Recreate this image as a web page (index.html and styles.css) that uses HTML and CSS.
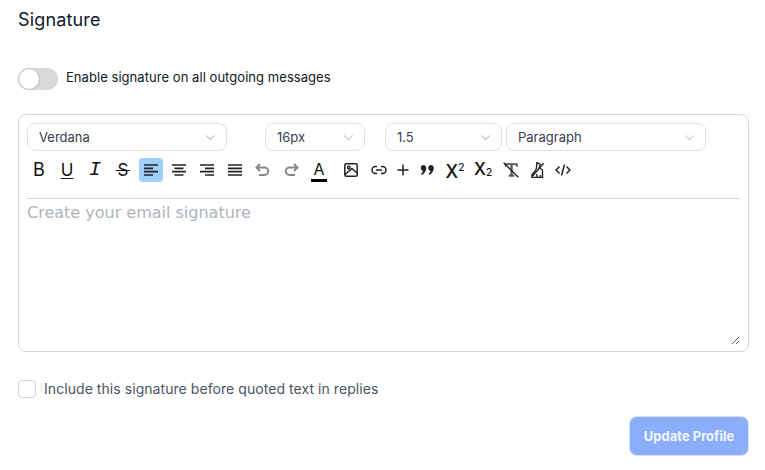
FILE: index.html
```html
<!DOCTYPE html>
<html lang="en">

<head>
  <meta charset="UTF-8" />
  <title>Signature</title>
  <link rel="stylesheet" href="styles.css">
</head>

<body>
  <h1 class="title">Signature</h1>

  <label class="toggle-row">
    <span class="toggle"><span class="knob"></span></span>
    <span>Enable signature on all outgoing messages</span>
  </label>

  <div class="editor">
    <div class="select-row">
      <div class="select font-select">Verdana<svg viewBox="0 0 12 8"><path d="M1 1.500l5 5 5-5" /></svg></div>
      <div class="select size-select">16px<svg viewBox="0 0 12 8"><path d="M1 1.500l5 5 5-5" /></svg></div>
      <div class="select height-select">1.5<svg viewBox="0 0 12 8"><path d="M1 1.500l5 5 5-5" /></svg></div>
      <div class="select font-select">Paragraph<svg viewBox="0 0 12 8"><path d="M1 1.500l5 5 5-5" /></svg></div>
    </div>

    <div class="toolbar">
      <button class="tool letter bold">B</button>
      <button class="tool letter underline">U</button>
      <button class="tool letter italic">I</button>
      <button class="tool letter strike">S</button>
      <button class="tool active">
        <svg viewBox="0 0 14 12"><path d="M0 1h14M0 4.300h9M0 7.700h14M0 11h9" /></svg>
      </button>
      <button class="tool">
        <svg viewBox="0 0 14 12"><path d="M0 1h14M2.500 4.300h9M0 7.700h14M2.500 11h9" /></svg>
      </button>
      <button class="tool">
        <svg viewBox="0 0 14 12"><path d="M0 1h14M5 4.300h9M0 7.700h14M5 11h9" /></svg>
      </button>
      <button class="tool">
        <svg viewBox="0 0 14 12"><path d="M0 1h14M0 4.300h14M0 7.700h14M0 11h14" /></svg>
      </button>
      <button class="tool muted">
        <svg class="icon16" viewBox="0 0 16 16"><path d="M5 2L1.500 5.500 5 9M1.500 5.500h8a3.750 3.750 0 0 1 0 7.500H4" /></svg>
      </button>
      <button class="tool muted">
        <svg class="icon16" viewBox="0 0 16 16"><path d="M11 2l3.500 3.500L11 9M14.500 5.500h-8a3.750 3.750 0 0 0 0 7.500H12" /></svg>
      </button>
      <button class="tool letter color">A</button>
      <button class="tool image-tool">
        <svg class="icon16" viewBox="0 0 16 16">
          <rect x="1.800" y="1.800" width="12.400" height="12.400" rx="1.500" />
          <circle cx="5.800" cy="5.600" r="1.300" />
          <path d="M2 12.500l7-6 5 4.500" />
        </svg>
      </button>
      <button class="tool">
        <svg class="icon16" viewBox="0 0 16 16"><path d="M6 4.500H4.500a3.500 3.500 0 0 0 0 7H6M10 4.500h1.500a3.500 3.500 0 0 1 0 7H10M5 8h6" /></svg>
      </button>
      <button class="tool plus">
        <svg class="icon16" viewBox="0 0 16 16"><path d="M8 2.500v11M2.500 8h11" /></svg>
      </button>
      <button class="tool">
        <svg class="icon16 solid" viewBox="0 0 16 16">
          <path d="M4 3a3.200 3.200 0 0 1 3.200 3.200c0 3.200-2 5.500-4.500 6.800l-.7-1c1.200-.9 1.800-1.800 2-2.900A3.200 3.200 0 0 1 4 3z" />
          <path d="M11.500 3a3.200 3.200 0 0 1 3.200 3.200c0 3.200-2 5.500-4.500 6.800l-.7-1c1.200-.9 1.800-1.800 2-2.900a3.200 3.200 0 0 1 0-6.100z" />
        </svg>
      </button>
      <button class="tool letter script sup-tool"><span>X<sup>2</sup></span></button>
      <button class="tool letter script sub-tool"><span>X<sub>2</sub></span></button>
      <button class="tool">
        <svg class="icon18" viewBox="0 0 16 16">
          <path class="grey-fill" d="M2.500 2h11.500v3h-1.500l-.5-1.500H9.500v8.500l1.500.3V14H6v-1.700l1.500-.3V3.500H4.500L4 5H2.500z" />
          <path d="M1.500 1.500l13 13" />
        </svg>
      </button>
      <button class="tool brush-tool">
        <svg class="icon18" viewBox="0 0 16 16">
          <path d="M7 1.500l3 1.500-1 3 3 2v6.500H2.500v-2l3-4 1-1.500zM7 14.500v-3M10 14.500v-2" />
          <path d="M3 13.500L13 2" />
        </svg>
      </button>
      <button class="tool code-tool">
        <svg class="icon16" viewBox="0 0 16 16"><path d="M4.500 4.500L1 8l3.500 3.500M11.500 4.500L15 8l-3.500 3.500M9.500 2.500l-3 11" /></svg>
      </button>
    </div>

    <div class="divider"></div>
    <textarea class="body-input" placeholder="Create your email signature"></textarea>
  </div>

  <label class="check-row">
    <span class="checkbox"></span>
    <span>Include this signature before quoted text in replies</span>
  </label>

  <div class="actions">
    <button class="save" disabled>Update Profile</button>
  </div>
</body>

</html>
```

FILE: styles.css
```css
body {
  font-family: Inter, Arial, sans-serif;
  margin: 0;
  padding: 9px 16px 0 18px;
  color: #111827;
  background-color: #fff;
}

.title {
  font-size: 18px;
  line-height: 22px;
  font-weight: 400;
  letter-spacing: 0.15px;
  margin: 0;
}

.toggle-row {
  display: flex;
  align-items: flex-start;
  gap: 8px;
  margin-top: 37px;
  font-size: 13px;
  line-height: 18px;
  letter-spacing: 0.05px;
}

.toggle {
  width: 40px;
  height: 22px;
  border-radius: 11px;
  background-color: #d9d9d9;
  display: flex;
  align-items: center;
}

.knob {
  width: 20px;
  height: 20px;
  margin-left: 1px;
  border-radius: 50%;
  background-color: #fff;
  box-shadow: 0 0 2px rgba(0, 0, 0, 0.35);
}

.editor {
  box-sizing: border-box;
  margin-top: 24px;
  height: 238px;
  border: 1px solid #d2d6e0;
  border-radius: 8px;
  padding: 8px 8px 6px 8px;
  display: flex;
  flex-direction: column;
}

.select-row {
  display: flex;
  gap: 4px;
}

.select {
  box-sizing: border-box;
  height: 28px;
  border: 1px solid #e0e2e7;
  border-radius: 8px;
  padding: 0 10px 0 11px;
  display: flex;
  align-items: center;
  justify-content: space-between;
  font-size: 13px;
  color: #374151;
}

.select svg {
  width: 11px;
  height: 7px;
  fill: none;
  stroke: #c4c7cd;
  stroke-width: 1.200;
}

.font-select {
  width: 200px;
}

.size-select {
  width: 100px;
  margin-left: 34px;
}

.height-select {
  width: 117px;
  margin-left: 16px;
}

.toolbar {
  display: flex;
  gap: 4px;
  margin-top: 7px;
}

.tool {
  width: 24px;
  height: 24px;
  padding: 0;
  border: 0;
  border-radius: 4px;
  background: none;
  color: #111;
  display: flex;
  align-items: center;
  justify-content: center;
  position: relative;
  font-family: Inter, Arial, sans-serif;
}

.tool svg {
  width: 14px;
  height: 12px;
  fill: none;
  stroke: #1f2328;
  stroke-width: 1.700;
}

.tool .icon16 {
  width: 16px;
  height: 16px;
  stroke-width: 1.500;
}

.tool .icon18 {
  width: 18px;
  height: 18px;
  stroke-width: 1.200;
}

.tool .solid {
  fill: #1f2328;
  stroke: none;
}

.tool .grey-fill {
  fill: #55585d;
  stroke: none;
}

.active {
  background-color: #a0cffb;
}

.tool.muted svg {
  stroke: #85888d;
  stroke-width: 2;
}

.letter {
  font-size: 17px;
  line-height: 24px;
  font-weight: 400;
}

.bold {
  font-size: 18px;
}

.underline {
  text-decoration: underline;
  text-underline-offset: 2px;
}

.italic {
  font-family: "Liberation Mono", monospace;
  font-style: italic;
  font-size: 20px;
}

.strike::after {
  content: "";
  position: absolute;
  left: 5px;
  right: 5px;
  top: 12px;
  height: 1px;
  background-color: #111;
}

.color {
  box-sizing: border-box;
  font-size: 16px;
  line-height: 18px;
  align-items: flex-start;
  padding-top: 2px;
}

.color::after {
  content: "";
  position: absolute;
  left: 4px;
  right: 4px;
  bottom: 0;
  height: 3px;
  background-color: #000;
}

.image-tool {
  margin-left: 4px;
}

.plus {
  width: 16px;
}

.script {
  font-weight: 500;
}

.script sup,
.script sub {
  font-size: 10px;
  line-height: 10px;
  vertical-align: baseline;
  position: relative;
}

.script sup {
  top: -7px;
}

.script sub {
  top: 1px;
}

.sup-tool {
  font-size: 18px;
  padding-top: 3px;
}

.sub-tool {
  font-size: 17px;
  padding-bottom: 3px;
}

.brush-tool {
  width: 22px;
}

.code-tool {
  width: 20px;
}

.divider {
  height: 1px;
  background-color: #d2d6e0;
  margin-top: 16px;
}

.body-input {
  flex: 1;
  border: 0;
  outline: 0;
  padding: 2px 0 0 0;
  resize: vertical;
  font-family: "DejaVu Sans", Verdana, sans-serif;
  font-size: 16px;
  line-height: 24px;
}

.body-input::placeholder {
  color: #adb5bd;
}

.check-row {
  display: flex;
  align-items: center;
  gap: 8px;
  margin-top: 28px;
  font-size: 14px;
  line-height: 18px;
  letter-spacing: 0.06px;
  color: #4b5563;
}

.checkbox {
  box-sizing: border-box;
  width: 18px;
  height: 18px;
  border: 1px solid #d1d5db;
  border-radius: 4px;
}

.actions {
  display: flex;
  justify-content: flex-end;
  margin-top: 18px;
}

.save {
  width: 120px;
  height: 40px;
  border: 1px solid #d5e0fc;
  border-radius: 8px;
  background-color: #8aaefa;
  color: #f2f6ff;
  font-family: Inter, Arial, sans-serif;
  font-size: 13px;
  font-weight: 700;
}
```
